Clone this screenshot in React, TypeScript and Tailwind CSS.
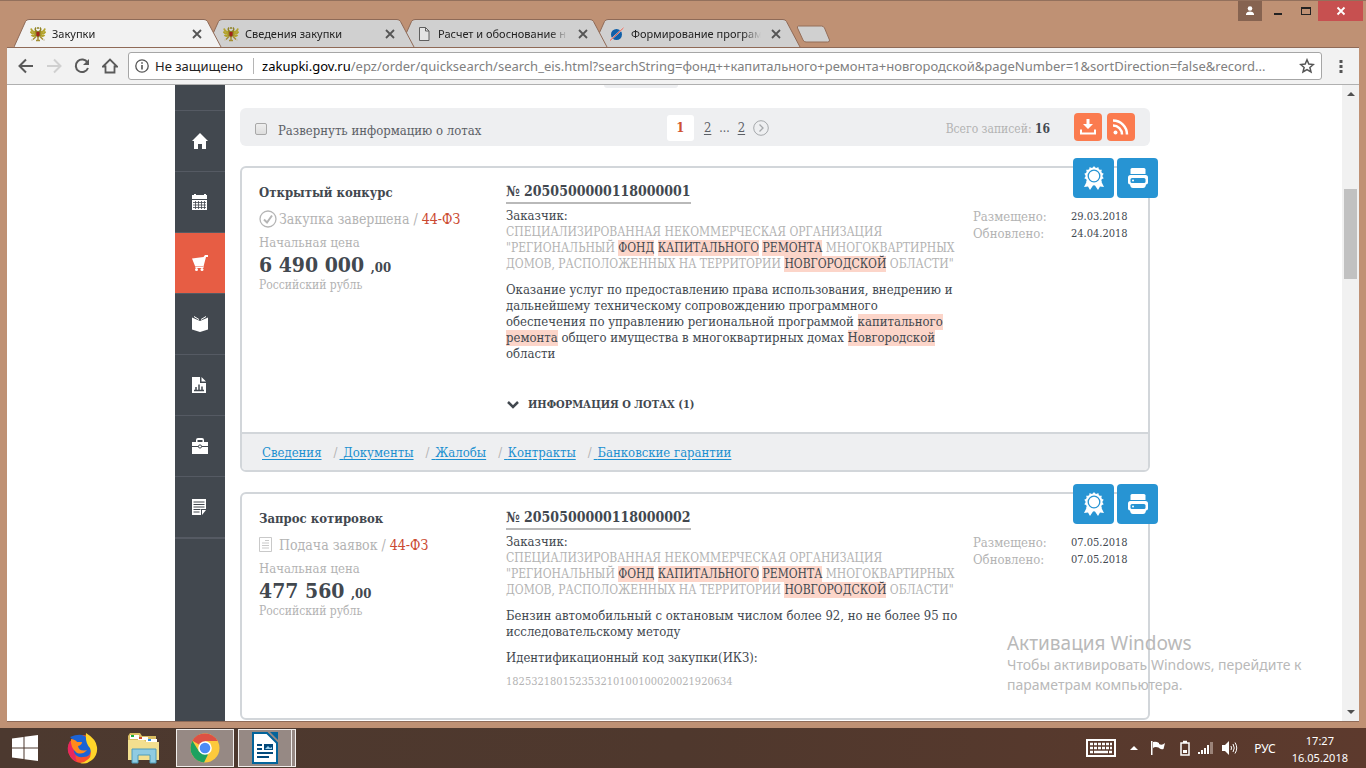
import type { ReactNode } from "react";

type Tab = {
	title: string;
	icon: ReactNode;
	layer: string;
	active?: boolean;
};

type Order = {
	id: string;
	type: string;
	status: string;
	finished: boolean;
	price: string;
	placed: string;
	updated: string;
	subject: string[];
	code?: string;
	links: string[];
};

const CUSTOMER = [
	"СПЕЦИАЛИЗИРОВАННАЯ НЕКОММЕРЧЕСКАЯ ОРГАНИЗАЦИЯ",
	'"РЕГИОНАЛЬНЫЙ *ФОНД* *КАПИТАЛЬНОГО* *РЕМОНТА* МНОГОКВАРТИРНЫХ',
	'ДОМОВ, РАСПОЛОЖЕННЫХ НА ТЕРРИТОРИИ *НОВГОРОДСКОЙ* ОБЛАСТИ"',
];

const ORDERS: Order[] = [
	{
		id: "2050500000118000001",
		type: "Открытый конкурс",
		status: "Закупка завершена",
		finished: true,
		price: "6 490 000",
		placed: "29.03.2018",
		updated: "24.04.2018",
		subject: [
			"Оказание услуг по предоставлению права использования, внедрению и",
			"дальнейшему техническому сопровождению программного",
			"обеспечения по управлению региональной программой *капитального*",
			"*ремонта* общего имущества в многоквартирных домах *Новгородской*",
			"области",
		],
		links: ["Сведения", "Документы", "Жалобы", "Контракты", "Банковские гарантии"],
	},
	{
		id: "2050500000118000002",
		type: "Запрос котировок",
		status: "Подача заявок",
		finished: false,
		price: "477 560",
		placed: "07.05.2018",
		updated: "07.05.2018",
		subject: [
			"Бензин автомобильный с октановым числом более 92, но не более 95 по",
			"исследовательскому методу",
		],
		code: "182532180152353210100100020021920634",
		links: [],
	},
];

function EagleIcon() {
	return (
		<svg viewBox="0 0 16 16" className="size-4 shrink-0" fill="none">
			<path d="M6 6Q2 6 1 2.500M6 7.500Q2 8.500 .5 5.500M6 9Q3 11 1.500 9M10 6Q14 6 15 2.500M10 7.500Q14 8.500 15.500 5.500M10 9Q13 11 14.500 9" stroke="#b3a32c" strokeWidth="1.800" />
			<path d="M7 5.500Q4 4 6 1.500M9 5.500Q12 4 10 1.500M7 2h2" stroke="#8f8226" strokeWidth="1.500" />
			<path d="M6 10.500L3 13.500M10 10.500l3 3M8 11v4M6 14.500h4" stroke="#a48f35" strokeWidth="1.500" />
			<path d="M1 14h2M13 14h2" stroke="#c9c1a8" />
			<path d="M5.500 5h5v5L8 11.500 5.500 10z" fill="#8c7a25" />
			<path d="M6.500 6h3v3.500L8 10.500 6.500 9.500z" fill="#a3231c" />
		</svg>
	);
}

function PageIcon() {
	return (
		<svg viewBox="0 0 16 16" className="size-4 shrink-0" fill="#e4e4e4" stroke="#5f5f5f">
			<path d="M3.500 1.500h6l3.500 3.500v9.500h-9.500z" />
			<path d="M9.500 1.500v3.500h3.500" fill="none" />
		</svg>
	);
}

function PlanetIcon() {
	return (
		<svg viewBox="0 0 16 16" className="size-4 shrink-0">
			<circle cx="7.500" cy="8.500" r="5.500" fill="#0f5fa8" />
			<path d="M1 14.500L14.500 2" stroke="#e9e4e4" strokeWidth="1.500" />
			<path d="M1 14.500L14.500 2" stroke="#e2513f" />
		</svg>
	);
}

const TABS: Tab[] = [
	{ title: "Закупки", icon: <EagleIcon />, layer: "z-40", active: true },
	{ title: "Сведения закупки", icon: <EagleIcon />, layer: "z-30" },
	{ title: "Расчет и обоснование н", icon: <PageIcon />, layer: "z-20" },
	{ title: "Формирование програм", icon: <PlanetIcon />, layer: "z-10" },
];

function BrowserTab({ tab }: { tab: Tab }) {
	const fill = tab.active ? "#f2f2f2" : "#d0d0d0";
	return (
		<div className={`relative flex items-center h-7 w-[208px] -mr-[15px] pl-4 pr-5 ${tab.layer}`}>
			<svg viewBox="0 0 208 28" preserveAspectRatio="none" className="absolute inset-0 size-full">
				<path d="M0 28L11.500 2.500Q12.500 .5 15 .5H190Q192.500 .5 193.500 2.500L207 28" fill={fill} stroke="#8f6a57" />
			</svg>
			<div className="relative flex items-center w-full gap-1.5 pt-0.5">
				{tab.icon}
				<a
					href="#tab"
					className="min-w-0 flex-1 whitespace-nowrap text-[11px] text-[#222] [mask-image:linear-gradient(90deg,#000_86%,transparent)]"
				>
					{tab.title}
				</a>
				<button type="button" aria-label="Закрыть вкладку" className="ml-1">
					<svg viewBox="0 0 10 10" className="size-2.5" stroke="#555" strokeWidth="1.800">
						<path d="M1 1l8 8M9 1l-8 8" />
					</svg>
				</button>
			</div>
		</div>
	);
}

function TitleBar() {
	return (
		<div className="relative flex h-[46px] pl-[7px] items-end">
			<div className="flex">
				{TABS.map((tab) => (
					<BrowserTab key={tab.title} tab={tab} />
				))}
			</div>
			<button type="button" aria-label="Новая вкладка" className="ml-2.5 mb-1">
				<svg viewBox="0 0 34 18" className="w-[34px] h-[18px]">
					<path d="M2.500 1h23q2 0 3 2l5 12q.5 2-2 2H10q-2 0-3-2L1.500 3Q1 1 2.500 1z" fill="#d0d0d0" stroke="#946e59" />
				</svg>
			</button>
			<div className="absolute top-0 right-[-4px] flex h-5 text-[#222]">
				<button type="button" aria-label="Профиль" className="w-6 bg-[#866350] flex items-center justify-center">
					<svg viewBox="0 0 10 10" className="size-2.5" fill="#fff">
						<circle cx="5" cy="2.500" r="2.300" />
						<path d="M1 9V7.500Q2 5.500 5 5.500T9 7.500V9z" />
					</svg>
				</button>
				<button type="button" aria-label="Свернуть" className="w-8 flex items-end justify-center pb-[6px]">
					<span className="w-2 h-[2px] bg-[#222]" />
				</button>
				<button type="button" aria-label="Развернуть" className="w-6 flex items-center justify-center">
					<span className="w-2.5 h-2 border border-t-2 border-[#222]" />
				</button>
				<button type="button" aria-label="Закрыть" className="w-[45px] bg-[#c75050] flex items-center justify-center">
					<svg viewBox="0 0 10 10" className="size-2.5" stroke="#fff" strokeWidth="1.800">
						<path d="M1.500 1.500l7 7M8.500 1.500l-7 7" />
					</svg>
				</button>
			</div>
		</div>
	);
}

function AddressBar() {
	return (
		<div className="flex items-center h-[38px] pl-[11px] pr-[11px] bg-[#f2f2f2] border-t border-[#8f6a57] border-b border-b-[#b0b0b0]">
			<div className="flex items-center gap-3 text-[#5a5a5a]">
				<button type="button" aria-label="Назад">
					<svg viewBox="0 0 16 16" className="size-4" fill="none" stroke="currentColor" strokeWidth="2">
						<path d="M8 1.500L1.500 8 8 14.500M2 8h13" />
					</svg>
				</button>
				<button type="button" aria-label="Вперёд" className="text-[#d0d0d0]">
					<svg viewBox="0 0 16 16" className="size-4" fill="none" stroke="currentColor" strokeWidth="2">
						<path d="M8 1.500L14.500 8 8 14.500M14 8H1" />
					</svg>
				</button>
				<button type="button" aria-label="Обновить">
					<svg viewBox="0 0 16 16" className="size-4" fill="none" stroke="currentColor" strokeWidth="2">
						<path d="M13.500 4.500A6.300 6.300 0 1 0 14 10" />
						<path d="M15 1v6H9z" fill="currentColor" stroke="none" />
					</svg>
				</button>
				<button type="button" aria-label="Домой">
					<svg viewBox="0 0 16 16" className="size-4" fill="none" stroke="currentColor" strokeWidth="1.800">
						<path d="M1 8.500L8 1.500l7 7h-2.500v6h-9v-6z" />
					</svg>
				</button>
			</div>
			<div className="flex flex-1 items-center h-7 ml-2.5 pl-1.5 pr-1.5 bg-white border border-[#a6a6a6] rounded-[3px] text-sm">
				<svg viewBox="0 0 14 14" className="size-3.5 shrink-0" fill="none" stroke="#555" strokeWidth="1.300">
					<circle cx="7" cy="7" r="6.200" />
					<path d="M7 6v4.500M7 3.300v1.500" strokeWidth="1.600" />
				</svg>
				<span className="ml-1.5 text-[13px] text-[#222] whitespace-nowrap">Не защищено</span>
				<span className="w-px h-4 bg-[#b5b5b5] ml-2.5 mr-2" />
				<label htmlFor="address" className="text-[13px] text-black">zakupki.gov.ru</label>
				<input
					id="address"
					className="flex-1 min-w-0 text-[13px] text-[#808080] outline-none"
					defaultValue="/epz/order/quicksearch/search_eis.html?searchString=фонд++капитального+ремонта+новгородской&pageNumber=1&sortDirection=false&record..."
				/>
				<button type="button" aria-label="Добавить в закладки">
					<svg viewBox="0 0 16 16" className="size-4" fill="none" stroke="#555" strokeWidth="1.500">
						<path d="M8 1.800l1.800 4.300 4.600.4-3.500 3 1.100 4.500L8 11.600 4 14l1.100-4.500-3.500-3 4.600-.4z" />
					</svg>
				</button>
			</div>
			<button type="button" aria-label="Меню" className="ml-3">
				<svg viewBox="0 0 14 14" className="size-3.5" fill="#555">
					<path d="M5.500 1h3v3h-3zM5.500 6h3v3h-3zM5.500 11h3v3h-3z" />
				</svg>
			</button>
		</div>
	);
}

const MENU: { label: string; icon: ReactNode; active?: boolean }[] = [
	{ label: "Главная", icon: <path d="M8 0L0 8h2v8h4v-5h4v5h4V8h2z" fill="#fff" /> },
	{
		label: "Календарь",
		icon: (
			<>
				<path d="M0 1h2V0h2v1h8V0h2v1h1v4H0zM0 6h15v10H0z" fill="#fff" />
				<path d="M1 8.500h13M1 11h13M1 13.500h13M3.500 7v8M6.500 7v8M9.500 7v8M12.500 7v8" stroke="#42484f" strokeWidth=".8" />
			</>
		),
	},
	{
		label: "Закупки",
		active: true,
		icon: (
			<>
				<path d="M0 3.500l11.500-1.500L13 0h3v2h-2L11.500 11.500V13H3.500L3 11z" fill="#fff" />
				<path d="M3 11.500h8" stroke="#e75d44" strokeWidth=".5" />
				<circle cx="4.500" cy="14.500" r="1.500" fill="#fff" />
				<circle cx="10" cy="14.500" r="1.500" fill="#fff" />
			</>
		),
	},
	{
		label: "Справочники",
		icon: (
			<>
				<path d="M0 1.500l8 3.500 8-3.500v12L8 16l-8-2.500z" fill="#fff" />
				<path d="M2 .5l5 3M14 .5L9 3.500" stroke="#fff" />
			</>
		),
	},
	{
		label: "Отчёты",
		icon: (
			<>
				<path d="M0 0h8v6h6v10H0zM9.500 0L14 4.500H9.500z" fill="#fff" />
				<path d="M2 13.500h10M4 13v-3M7 13V7.500M10 13V9.500" stroke="#42484f" strokeWidth="1.500" />
			</>
		),
	},
	{
		label: "Контракты",
		icon: (
			<>
				<path d="M0 4h4V2q0-2 2-2h4q2 0 2 2v2h4v4H0zM5.500 4h5V2h-5zM0 9h16v7H0z" fill="#fff" fillRule="evenodd" />
				<circle cx="8" cy="8.500" r="1.600" fill="#fff" stroke="#42484f" />
			</>
		),
	},
	{
		label: "Документы",
		icon: (
			<>
				<path d="M0 0h14v10H9v6H0zM10 11h4l-4 5z" fill="#fff" />
				<path d="M1.500 3h11M1.500 5.500h11M1.500 8h11M1.500 10.500h7M1.500 13h6" stroke="#42484f" />
			</>
		),
	},
];

function Sidebar() {
	return (
		<nav className="w-[50px] shrink-0 bg-[#42484f]">
			<div className="h-[25px]" />
			{MENU.map((item) => (
				<a
					key={item.label}
					href="#section"
					aria-label={item.label}
					className={`flex h-[61px] items-center justify-center border-t border-[#555a63] ${item.active ? "bg-[#e75d44]" : ""}`}
				>
					<svg viewBox="0 0 16 16" className="size-4">{item.icon}</svg>
				</a>
			))}
			<div className="border-t-2 border-[#555a63]" />
		</nav>
	);
}

function ListToolbar() {
	return (
		<div className="flex items-center justify-between h-[38px] pl-[15px] pr-[15px] rounded-md bg-[#eeeff1]">
			<label className="flex flex-1 items-center gap-[11px] pt-1 text-[13px] text-[#5c6066]">
				<input
					type="checkbox"
					className="appearance-none size-3 rounded-[2px] border border-[#a8a8a8] bg-gradient-to-b from-[#eee] to-[#ddd]"
				/>
				<span className="pt-1">Развернуть информацию о лотах</span>
			</label>
			<div className="flex items-center pl-[46px] pt-0.5 text-[13px] text-[#5c6066]">
				<span className="flex h-[26px] w-[27px] items-center justify-center rounded-[3px] bg-white font-bold text-[#d0522f]">1</span>
				<a href="#page-2" className="ml-2.5 underline underline-offset-2">2</a>
				<span className="mx-2 text-xs">...</span>
				<a href="#last-page" className="underline underline-offset-2">2</a>
				<a href="#next-page" aria-label="Следующая" className="ml-2">
					<svg viewBox="0 0 16 16" className="size-4" fill="none" stroke="#a5a8ab">
						<circle cx="8" cy="8" r="7.300" />
						<path d="M6.500 4.500L10 8l-3.500 3.500" strokeWidth="1.300" />
					</svg>
				</a>
			</div>
			<div className="flex flex-1 items-center justify-end text-xs text-[#b3b3b3]">
				<span className="pt-1">
					Всего записей: <b className="text-[#42484f]">16</b>
				</span>
				<button type="button" aria-label="Скачать" className="ml-6 flex size-7 items-center justify-center rounded bg-[#fb7b4f]">
					<svg viewBox="0 0 18 18" className="size-[18px]" fill="none" stroke="#fff" strokeWidth="2">
						<path d="M7.500 1h3v5h3.500L9 11 4 6h3.500z" fill="#fff" stroke="none" />
						<path d="M2 11.500v4h14v-4" />
					</svg>
				</button>
				<button type="button" aria-label="RSS" className="ml-[5px] flex size-7 items-center justify-center rounded bg-[#fb7b4f]">
					<svg viewBox="0 0 18 18" className="size-[18px]" fill="none" stroke="#fff" strokeWidth="2.500">
						<circle cx="3.500" cy="14.500" r="2" fill="#fff" stroke="none" />
						<path d="M1 7.500a9 9 0 0 1 9 9M1 2.500a14 14 0 0 1 14 14" />
					</svg>
				</button>
			</div>
		</div>
	);
}

// words between asterisks are the search hits
function Highlighted({ lines }: { lines: string[] }) {
	return (
		<>
			{lines.map((line) => (
				<span key={line} className="block h-4 whitespace-nowrap">
					{line.split("*").map((part, i) =>
						i % 2 ? (
							<mark key={i} className="inline-block bg-[#fcd5c9] text-[#42484f]">{part}</mark>
						) : (
							part
						),
					)}
				</span>
			))}
		</>
	);
}

function StatusIcon({ finished }: { finished: boolean }) {
	if (finished) {
		return (
			<svg viewBox="0 0 18 18" className="size-[18px] shrink-0" fill="none" stroke="#b5b5b5">
				<circle cx="9" cy="9" r="8" strokeWidth="1.300" />
				<path d="M5 9.500l3 3 5-7" strokeWidth="2" />
			</svg>
		);
	}
	return (
		<svg viewBox="0 0 18 18" className="size-[18px] shrink-0" fill="none" stroke="#c9c9c9">
			<path d="M.5 1.500h12v14H.5z" />
			<path d="M6 4.500h4M3 7h7M3 9.500h7M3 12h7" />
		</svg>
	);
}

const roseTeeth = Array.from({ length: 14 }, (_, i) => (i * 360) / 14);

function CardActions() {
	return (
		<div className="absolute -top-[10px] -right-[10px] flex gap-[3px]">
			<button type="button" aria-label="Электронная подпись" className="flex h-10 w-[41px] items-center justify-center rounded bg-[#2794d3]">
				<svg viewBox="0 0 24 24" className="size-6" fill="#fff">
					<path d="M6 13l-4 8 4-.5 2 3.500 4-6 4 6 2-3.500 4 .5-4-8z" />
					<circle cx="12" cy="10" r="8.500" />
					{roseTeeth.map((angle) => (
						<path key={angle} d="M10.500 2L12 0l1.500 2z" transform={`rotate(${angle} 12 10)`} />
					))}
					<circle cx="12" cy="10" r="5.800" fill="none" stroke="#2794d3" strokeWidth="1.300" />
				</svg>
			</button>
			<button type="button" aria-label="Печать" className="flex h-10 w-[41px] items-center justify-center rounded bg-[#2794d3]">
				<svg viewBox="0 0 20 20" className="size-5" fill="#fff">
					<path d="M4 0h12q1.500 0 1.500 1.500V6h-15V1.500Q2.500 0 4 0z" />
					<path d="M2.500 7h15Q20 7 20 9.500v5q0 2-2 2-.5 3.500-3 3.500H5q-2.500 0-3-3.500-2 0-2-2v-5Q0 7 2.500 7z" />
					<path d="M4 10h12q1.500 0 1.500 1.500v2q0 1.500-1.500 1.500H4q-1.500 0-1.500-1.500v-2Q2.500 10 4 10z" fill="#2794d3" />
					<circle cx="5" cy="12.500" r="1" />
				</svg>
			</button>
		</div>
	);
}

function OrderCard({ order }: { order: Order }) {
	return (
		<article className="relative mt-5 rounded-md border-2 border-[#d2d6da] bg-white text-[13px] leading-4 text-[#42484f]">
			<CardActions />
			<div className="flex px-[17px] pt-3 pb-[19px]">
				<div className="w-[247px] shrink-0">
					<h2 className="mt-[5px] font-bold">{order.type}</h2>
					<div className="mt-2 flex h-5 items-center gap-[2px] text-sm text-[#b3b3b3]">
						<StatusIcon finished={order.finished} />
						<span>
							{order.status} / <span className="text-[#cb4a31]">44-ФЗ</span>
						</span>
					</div>
					<div className="mt-1.5 text-[#b3b3b3]">Начальная цена</div>
					<div className="mt-0.5 text-[21px] leading-6 font-bold">
						{order.price} <span className="text-[13px]">,00</span>
					</div>
					<div className="text-xs leading-[10px] text-[#b3b3b3]">Российский рубль</div>
				</div>
				<div className="flex-1">
					<h3 className="h-7">
						<a href="#order" className="inline-block border-b-2 border-[#b9b9b9] text-sm leading-[22px] font-bold">
							№ {order.id}
						</a>
					</h3>
					<div>Заказчик:</div>
					<p className="text-xs text-[#b3b3b3]">
						<Highlighted lines={CUSTOMER} />
					</p>
					<p className="mt-2.5">
						<Highlighted lines={order.subject} />
					</p>
					{order.code ? (
						<>
							<p className="mt-2.5">Идентификационный код закупки(ИКЗ):</p>
							<p className="mt-2 pb-[9px] text-[11px] text-[#b3b3b3]">{order.code}</p>
						</>
					) : (
						<button type="button" className="mt-[35px] flex items-center gap-2 text-[11px] font-bold">
							<svg viewBox="0 0 14 10" className="w-3.5 h-2.5" fill="none" stroke="#42484f" strokeWidth="2.500">
								<path d="M2 2l5 5 5-5" />
							</svg>
							ИНФОРМАЦИЯ О ЛОТАХ (1)
						</button>
					)}
				</div>
				<dl className="mt-7 grid w-[158px] shrink-0 grid-cols-[98px_1fr] content-start leading-[17px]">
					<dt className="text-[#b3b3b3]">Размещено:</dt>
					<dd className="text-[11px]">{order.placed}</dd>
					<dt className="text-[#b3b3b3]">Обновлено:</dt>
					<dd className="text-[11px]">{order.updated}</dd>
				</dl>
			</div>
			{order.links.length > 0 && (
				<div className="flex h-[38px] items-center border-t-2 border-[#d2d6da] rounded-b bg-[#eeeff1] px-5 pt-0.5">
					{order.links.map((link, i) => (
						<span key={link}>
							{i > 0 && <span className="ml-3 mr-0.5 text-[#b3b3b3]">/</span>}
							<a href="#details" className="text-[#1b8fd0] underline underline-offset-2">
								{i > 0 && "\u00a0"}
								{link}
							</a>
						</span>
					))}
				</div>
			)}
		</article>
	);
}

function ScrollBar() {
	return (
		<div className="flex w-[17px] shrink-0 flex-col items-center bg-[#f1f1f1] py-[7px]">
			<svg viewBox="0 0 8 4" className="w-2 h-1" fill="#505050"><path d="M4 0l4 4H0z" /></svg>
			<div className="mt-[93px] h-[90px] w-[13px] bg-[#c1c1c1]" />
			<svg viewBox="0 0 8 4" className="mt-auto w-2 h-1" fill="#505050"><path d="M0 0h8L4 4z" /></svg>
		</div>
	);
}

function Taskbar() {
	return (
		<footer className="flex h-10 shrink-0 items-center bg-gradient-to-r from-[#4c392f] via-[#4f382d] to-[#5d3a2d] pr-[18px] text-xs text-white">
			<button type="button" aria-label="Пуск" className="ml-3">
				<svg viewBox="0 0 26 26" className="size-[26px]" fill="#fff">
					<path d="M0 3.500L11.500 2v10.500H0zM12.500 1.800L26 0v12.500H12.500zM0 13.500h11.500V24L0 22.500zM12.500 13.500H26V26l-13.500-1.800z" />
				</svg>
			</button>
			<button type="button" aria-label="Firefox" className="ml-7">
				<svg viewBox="0 0 32 32" className="size-8">
					<circle cx="16" cy="17" r="14" fill="#f7502f" />
					<path d="M4 9Q0 16 3 22t8 8q-4-8 2-12z" fill="#e8265f" />
					<path d="M7 8L4 5q7-3 12-2 8 2 9 12t-8 10q-7 1-9-5z" fill="#1c63d5" />
					<path d="M5 7q5 1 6 3l5 0q0 3-4 4 1 6 9 4-4 5-10 3-7-5-6-14z" fill="#ff8a1a" />
					<path d="M20 1q10 6 11 14t-5 13-12 3q14-3 10-15-5-5-4-15z" fill="#ffd52a" />
				</svg>
			</button>
			<button type="button" aria-label="Проводник" className="ml-7">
				<svg viewBox="0 0 34 34" className="size-[34px]">
					<path d="M2 5l2-3h10l2 3h14v22H2z" fill="#d9bd62" />
					<path d="M4 4h9v4H4z" fill="#fff" />
					<path d="M5 4h3v2H5z" fill="#1cae3b" />
					<path d="M12 6h10v3H12z" fill="#fff" />
					<path d="M13 6h3v2h-3z" fill="#cf4c2c" />
					<path d="M20 8h11v3H20z" fill="#fff" />
					<path d="M22 8h3v2h-3z" fill="#2f8fe0" />
					<path d="M2 9h16l2 2h13v18H2z" fill="#f3df8f" />
					<path d="M6 32V18h24v14h-6v-8H12v8z" fill="#8fcbe2" stroke="#4e9cba" />
				</svg>
			</button>
			<button type="button" aria-label="Chrome" className="ml-4 flex h-[38px] w-[58px] items-center justify-center border border-[#f1eeec] bg-[#968984]">
				<svg viewBox="0 0 30 30" className="size-[30px]">
					<circle cx="15" cy="15" r="14.500" fill="#fcc93c" />
					<path d="M2.400 7.800A14.500 14.500 0 0 1 27.600 8H15v7z" fill="#dd5144" />
					<path d="M2.400 7.800L9 18.500l9 3-4 8A14.500 14.500 0 0 1 2.400 7.800z" fill="#1da160" />
					<circle cx="15" cy="15" r="6.800" fill="#fff" />
					<circle cx="15" cy="15" r="5.300" fill="#4c8bf5" />
				</svg>
			</button>
			<button type="button" aria-label="Writer" className="ml-1 flex h-[38px] w-[54px] items-center justify-center border border-[#f1eeec] bg-[#968984]">
				<svg viewBox="0 0 26 32" className="w-[26px] h-8">
					<path d="M1 1h14l10 10v20H1z" fill="#fff" stroke="#03649b" strokeWidth="2" />
					<path d="M18 0h8v8z" fill="#03649b" />
					<path d="M5 13h5M5 17h5M5 21h16M5 25h12" stroke="#03497b" strokeWidth="2" />
					<path d="M12 12h9v6h-9z" fill="#03497b" />
					<path d="M13 17l3-3 2 2 2-1v2z" fill="#9fd2ee" />
				</svg>
			</button>
			<span className="h-[38px] w-1 border border-l-0 border-[#f1eeec] bg-[#968984]" />
			<div className="ml-auto flex items-center">
				<svg viewBox="0 0 30 18" className="w-[30px] h-[18px]">
					<path d="M1 1h28v16H1z" fill="none" stroke="#fff" strokeWidth="2" />
					<path d="M4 5h22M4 9h22" stroke="#fff" strokeWidth="2.500" strokeDasharray="3 1" />
					<path d="M4 13h3M8 13h14M23 13h3" stroke="#fff" strokeWidth="2.500" />
				</svg>
				<svg viewBox="0 0 8 4" className="ml-[14px] w-2 h-1" fill="#fff"><path d="M4 0l4 4H0z" /></svg>
				<svg viewBox="0 0 16 16" className="ml-3 size-4" fill="#fff">
					<path d="M1 1h1.500v14H1zM3 2q3-1 6 1v1q3 2 6-1l-1.500 6q-3 1-5-1.500Q5 6.500 3 8z" />
				</svg>
				<svg viewBox="0 0 10 16" className="ml-3.5 w-2.5 h-4" fill="none" stroke="#fff" strokeWidth="1.500">
					<path d="M1 3h8v12H1zM3 1.500h4" />
					<path d="M3 10h4v3H3z" fill="#fff" stroke="none" />
				</svg>
				<svg viewBox="0 0 16 12" className="ml-2 w-4 h-3" fill="#fff">
					<path d="M0 10h2v2H0zM3 8h2v4H3zM6 6h2v6H6zM9 3h2v9H9z" />
					<path d="M12 0h3v12h-3z" fill="#9b8379" />
				</svg>
				<svg viewBox="0 0 16 14" className="ml-2 w-4 h-3.5" fill="#fff">
					<path d="M0 4h3l4-4v14l-4-4H0z" />
					<path d="M9 5q1 2 0 4M11 3q2.500 4 0 8M13 1.500q3.500 5.500 0 11" fill="none" stroke="#fff" />
				</svg>
				<span className="ml-4 pt-0.5">РУС</span>
				<div className="ml-4 pt-0.5 text-center text-[11px] leading-[17px]">
					<div>17:27</div>
					<div>16.05.2018</div>
				</div>
			</div>
		</footer>
	);
}

export default function App() {
	return (
		<div className="relative flex h-screen flex-col overflow-hidden font-['Noto_Sans',sans-serif]">
			<div className="flex min-h-0 flex-1 flex-col border-t border-[#93705c] bg-[#bf9174] px-[7px] pb-[6px]">
				<TitleBar />
				<AddressBar />
				<div className="flex min-h-0 flex-1 border-b border-[#8f6a57] bg-white">
					<div className="min-w-0 flex-1 overflow-hidden font-['DejaVu_Serif_Condensed','DejaVu_Serif',serif]">
						<div className="mx-auto flex h-full max-w-[999px] gap-[15px] pr-6">
							<Sidebar />
							<main className="min-w-0 flex-1">
								<div className="ml-[40%] mb-5 h-[3px] w-[74px] rounded-b bg-[#eeeff1]" />
								<ListToolbar />
								{ORDERS.map((order) => (
									<OrderCard key={order.id} order={order} />
								))}
							</main>
						</div>
					</div>
					<ScrollBar />
				</div>
			</div>
			<Taskbar />
			<div className="pointer-events-none absolute right-[57px] bottom-[73px] w-[302px] text-[#b9b9b9]">
				<div className="text-[19px] leading-6">Активация Windows</div>
				<div className="whitespace-nowrap text-sm leading-5">
					Чтобы активировать Windows, перейдите к<br />
					параметрам компьютера.
				</div>
			</div>
		</div>
	);
}
